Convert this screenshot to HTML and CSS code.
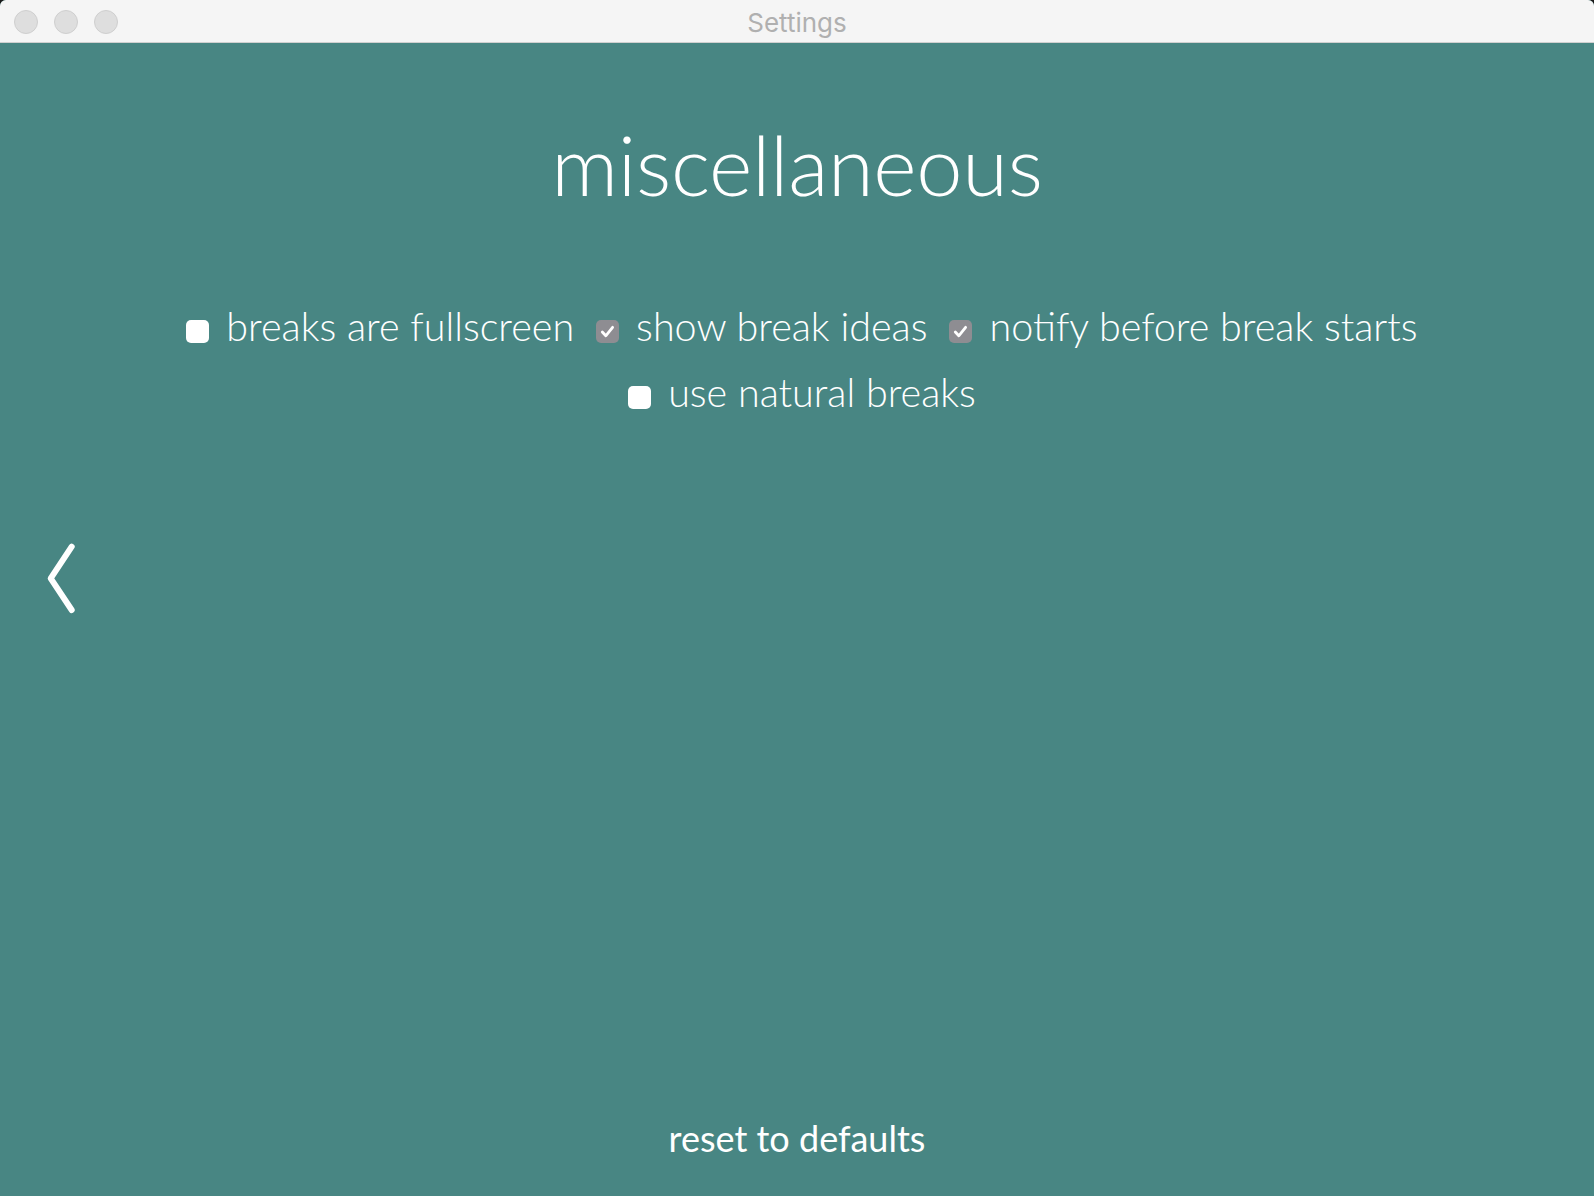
FILE: index.html
```html
<!DOCTYPE html>
<html lang="en">
<head>
<meta charset="utf-8">
<title>Settings</title>
<link rel="stylesheet" href="styles.css">
</head>
<body>
<div class="window">
  <header class="titlebar">
    <div class="lights">
      <span class="light"></span>
      <span class="light"></span>
      <span class="light"></span>
    </div>
    <div class="wintitle">Settings</div>
  </header>
  <main class="content">
    <h1 class="heading">miscellaneous</h1>
    <div class="options">
      <label class="option"><span class="box"></span><span class="label">breaks are fullscreen</span></label>
      <label class="option"><span class="box checked"><svg viewBox="0 0 23 23" width="23" height="23"><path d="M6.3 12 L9.8 15.8 L16.6 7.3" fill="none" stroke="#fff" stroke-width="2.8" stroke-linecap="round" stroke-linejoin="round"/></svg></span><span class="label">show break ideas</span></label>
      <label class="option"><span class="box checked"><svg viewBox="0 0 23 23" width="23" height="23"><path d="M6.3 12 L9.8 15.8 L16.6 7.3" fill="none" stroke="#fff" stroke-width="2.8" stroke-linecap="round" stroke-linejoin="round"/></svg></span><span class="label">notify before break starts</span></label>
      <label class="option"><span class="box"></span><span class="label">use natural breaks</span></label>
    </div>
    <div class="reset">reset to defaults</div>
    <a class="prev" href="#" aria-label="previous">
      <svg viewBox="0 0 40 84" width="40" height="84"><path d="M31.7 10.7 L10.7 42.3 L31.7 74" fill="none" stroke="#fff" stroke-width="6" stroke-linecap="round" stroke-linejoin="round"/></svg>
    </a>
  </main>
</div>
</body>
</html>
```
FILE: styles.css
```css
html, body {
  margin: 0;
  padding: 0;
  background: #1a1a1a;
}
body {
  width: 1594px;
  height: 1196px;
  overflow: hidden;
}
.window {
  display: flex;
  flex-direction: column;
  height: 1196px;
  border-radius: 6px 6px 0 0;
  overflow: hidden;
  background: #488683;
}
.titlebar {
  position: relative;
  height: 42px;
  flex: none;
  background: #f5f5f5;
  border-bottom: 1px solid #d0d0d0;
  display: flex;
  align-items: center;
}
.lights {
  display: flex;
  gap: 16px;
  padding-left: 14px;
  padding-top: 2px;
}
.light {
  width: 22px;
  height: 22px;
  border-radius: 50%;
  background: #dedede;
  border: 1px solid #cfcfcf;
}
.wintitle {
  position: absolute;
  left: 0;
  right: 0;
  top: 1px;
  text-align: center;
  font-family: Inter, "Liberation Sans", sans-serif;
  font-size: 26px;
  line-height: 44px;
  color: #b0b0b0;
}
.content {
  position: relative;
  flex: 1;
  display: flex;
  flex-direction: column;
  align-items: center;
  padding: 72px 80px 36px;
  font-family: Lato, "Liberation Sans", sans-serif;
  color: #fff;
}
.heading {
  margin: 0;
  font-size: 83px;
  font-weight: 300;
  line-height: 1.2;
  letter-spacing: -0.3px;
}
.options {
  margin-top: 78px;
  width: 100%;
  display: flex;
  flex-wrap: wrap;
  justify-content: center;
  column-gap: 22px;
  padding-left: 10px;
  box-sizing: border-box;
}
.option {
  display: block;
  font-size: 39.5px;
  font-weight: 300;
  line-height: 66px;
  white-space: nowrap;
}
.box {
  display: inline-block;
  width: 23px;
  height: 23px;
  border-radius: 5px;
  background: #fff;
  vertical-align: -2px;
  margin-right: 17px;
}
.box svg {
  display: block;
}
.box.checked {
  background: #8e8d92;
}
.reset {
  margin-top: auto;
  font-size: 36px;
  font-weight: 400;
  line-height: 1.2;
}
.prev {
  position: absolute;
  left: 40px;
  top: 493px;
  width: 40px;
  height: 84px;
  display: block;
}
.prev svg {
  display: block;
}
```
